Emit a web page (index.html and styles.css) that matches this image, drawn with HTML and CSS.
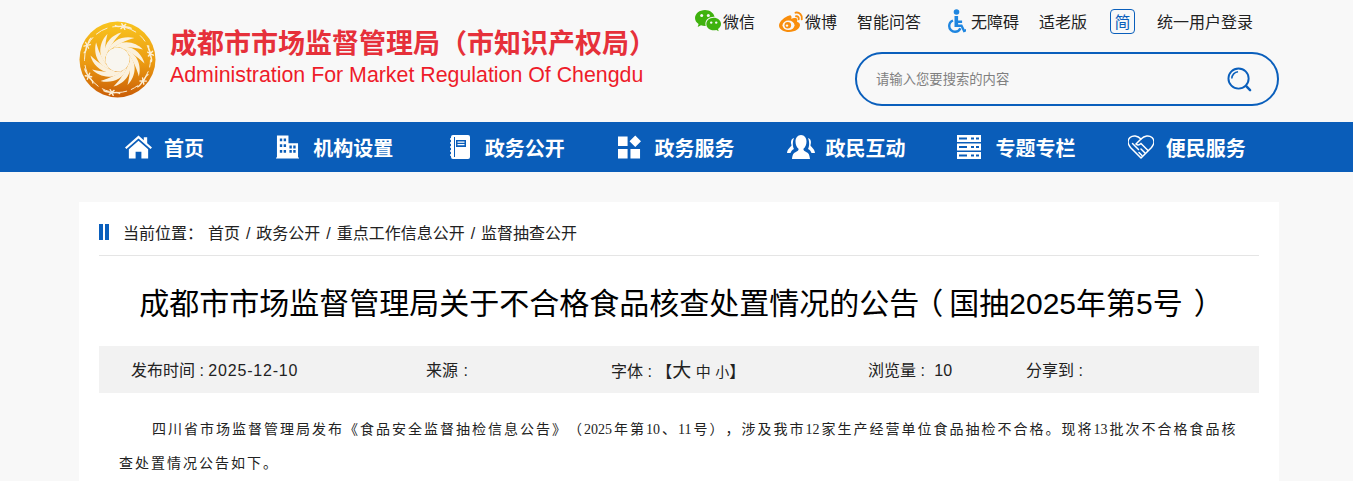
FILE: index.html
```html
<!DOCTYPE html>
<html lang="zh-CN">
<head>
<meta charset="utf-8">
<title>成都市市场监督管理局</title>
<link rel="stylesheet" href="styles.css">
</head>
<body>
<header class="site-header">
  <div class="wrap header-inner">
    <div class="brand">
      <svg class="logo" viewBox="-38.500 -38.500 77 77" aria-hidden="true">
        <defs>
          <linearGradient id="gold" x1="0" y1="0" x2="0" y2="1">
            <stop offset="0" stop-color="#f9c51f"/>
            <stop offset="0.55" stop-color="#eb9a12"/>
            <stop offset="1" stop-color="#c95c06"/>
          </linearGradient>
          <path id="blade" d="M4,-27 C-5,-25 -16,-15 -12,-2 C-9,-11 -3,-20 4,-27Z" fill="#fbf1dd"/>
          <g id="knot" fill="none" stroke="#fbeed6" stroke-width="1.400" stroke-linecap="round">
            <path d="M-8,-33 C-5,-31.500 -3,-34 0,-33.500 C3,-33 5,-34.500 8,-33"/>
            <path d="M-2,-36 L2,-31 M2,-36 L-2,-31"/>
          </g>
        </defs>
        <circle r="38" fill="url(#gold)"/>
        <circle r="12" fill="#f8f6f0"/>
        <use href="#blade"/>
        <use href="#blade" transform="rotate(30)"/>
        <use href="#blade" transform="rotate(60)"/>
        <use href="#blade" transform="rotate(90)"/>
        <use href="#blade" transform="rotate(120)"/>
        <use href="#blade" transform="rotate(150)"/>
        <use href="#blade" transform="rotate(180)"/>
        <use href="#blade" transform="rotate(210)"/>
        <use href="#blade" transform="rotate(240)"/>
        <use href="#blade" transform="rotate(270)"/>
        <use href="#blade" transform="rotate(300)"/>
        <use href="#blade" transform="rotate(330)"/>
        <circle r="33" fill="none" stroke="#fbeed6" stroke-width="1" stroke-dasharray="8 4 13 5"/>
        <use href="#knot" transform="rotate(10)"/>
        <use href="#knot" transform="rotate(80)"/>
        <use href="#knot" transform="rotate(130)"/>
        <use href="#knot" transform="rotate(190)"/>
        <use href="#knot" transform="rotate(240)"/>
        <use href="#knot" transform="rotate(295)"/>
      </svg>
      <div class="brand-text">
        <div class="brand-cn">成都市市场监督管理局（市知识产权局）</div>
        <div class="brand-en">Administration For Market Regulation Of Chengdu</div>
      </div>
    </div>
    <div class="tools">
      <nav class="toplinks">
        <a class="toplink link-wechat">
          <svg class="ico-wechat" viewBox="0 0 26 22" aria-hidden="true">
            <path fill="#3fb20e" d="M10 0C4.5 0 0 3.6 0 8c0 2.5 1.4 4.6 3.6 6.1L2.7 17l3.3-1.7c1.200.4 2.600.6 4 .6h.7a6.500 6.500 0 0 1-.3-1.900C10.400 9.900 14 6.800 18.800 6.800h.8C18.700 2.900 14.800 0 10 0z"/>
            <circle cx="6.700" cy="5.400" r="1.500" fill="#f8f8f8"/>
            <circle cx="13.300" cy="5.400" r="1.500" fill="#f8f8f8"/>
            <path fill="#3fb20e" d="M26 14c0-3.800-3.400-6.300-7.300-6.300-4.200 0-7.400 2.800-7.400 6.300s3.200 6.300 7.400 6.300c.9 0 1.800-.1 2.600-.4l2.400 1.400-.7-2.300c1.800-1.200 3-2.900 3-5z"/>
            <circle cx="16.200" cy="12.600" r="1.200" fill="#f8f8f8"/>
            <circle cx="21.200" cy="12.600" r="1.200" fill="#f8f8f8"/>
          </svg>
          <span>微信</span>
        </a>
        <a class="toplink link-weibo">
          <svg class="ico-weibo" viewBox="0 0 25 22" aria-hidden="true">
            <path fill="#f98e0c" d="M10.500 5.500C6 6.500 0 11.500 0 15.500 0 19.500 5 22 10 22c6.500 0 11-3.700 11-7 0-2-1.700-2.900-3-3.300.5-1.400.5-2.800-.6-3.400-1.300-.7-3.700-.1-5.100.6.500-1.800.2-3.100-.7-3.500-.3-.1-.7-.1-1.100.1z"/>
            <ellipse cx="9.500" cy="15.300" rx="6" ry="4.800" fill="#f8f8f8"/>
            <circle cx="8.800" cy="15.300" r="3.300" fill="#f98e0c"/>
            <circle cx="8" cy="15.600" r="1.200" fill="#f8f8f8"/>
            <path fill="none" stroke="#f98e0c" stroke-width="1.900" stroke-linecap="round" d="M16.500 2.700c3.800-.9 7.200 2.500 6.300 6.700M17 6.300c1.800-.4 3.100 1 2.700 2.900"/>
          </svg>
          <span>微博</span>
        </a>
        <a class="toplink link-qa">智能问答</a>
        <a class="toplink link-access">
          <svg class="ico-access" viewBox="0 0 18 24" aria-hidden="true">
            <circle cx="8.500" cy="3" r="2.800" fill="#1f86e0"/>
            <path fill="#1f86e0" d="M6.500 7h3.600v4.500h4v2.400h-4l.1 1.500h4l2.500 5.200 1.300-.5.700 2-3.200 1.300-2.600-5.500H6.500z"/>
            <path fill="none" stroke="#1f86e0" stroke-width="2.400" d="M5 11.500C2.500 12.500 1.200 14.500 1.200 17c0 3.400 2.700 5.800 5.800 5.800 2.500 0 4.500-1.300 5.500-3.500"/>
          </svg>
          <span>无障碍</span>
        </a>
        <a class="toplink link-old">适老版</a>
        <a class="toplink link-lang">简</a>
        <a class="toplink link-login">统一用户登录</a>
      </nav>
      <form class="search">
        <input class="search-input" type="text" placeholder="请输入您要搜索的内容">
        <svg class="ico-search" viewBox="0 0 26 26" aria-hidden="true">
          <circle cx="12" cy="12" r="10.500" fill="none" stroke="#0a5fbc" stroke-width="2"/>
          <path fill="none" stroke="#0a5fbc" stroke-width="1.600" d="M5 12c0-3.800 3-6.800 6.500-7"/>
          <path fill="none" stroke="#0a5fbc" stroke-width="2.600" stroke-linecap="round" d="M20 20l4 4"/>
        </svg>
      </form>
    </div>
  </div>
</header>

<nav class="mainnav">
  <div class="wrap nav-inner">
    <a class="nav-item">
      <svg class="nav-ico ico-home" viewBox="0 0 28 24" aria-hidden="true"><path fill="#fff" d="M14 0 0 12.500l1.500 1.700L14 3.200l12.500 11 1.500-1.700-5-4.500V2h-3.500v3zM14 5.500 4 14.300V24h7v-7h6v7h7v-9.700z"/></svg>
      <span>首页</span>
    </a>
    <a class="nav-item">
      <svg class="nav-ico ico-building" viewBox="0 0 24 24" aria-hidden="true"><path fill="#fff" fill-rule="evenodd" d="M1 0h12v8h10v15h1v1H0v-1h1zM4 3v3h2.500V3zm4 0v3h2.500V3zM4 9v3h2.500V9zm4 0v3h2.500V9zm6 1.500v3h2.500v-3zm4 0v3h2.500v-3zM4 15v3h2.500v-3zm4 0v3h2.500v-3zm6 0v3h2.500v-3zm4 0v3h2.500v-3z"/></svg>
      <span>机构设置</span>
    </a>
    <a class="nav-item nav-item-book">
      <svg class="nav-ico ico-book" viewBox="0 0 20 24" aria-hidden="true"><path fill="#fff" fill-rule="evenodd" d="M3 0h15a2 2 0 0 1 2 2v20a2 2 0 0 1-2 2H3a2 2 0 0 1-2-2V2a2 2 0 0 1 2-2zm3 5v7h10V5zm1.500 1.500h7v1.200h-7zm0 2.500h7v1.200h-7z"/><path fill="none" stroke="#fff" stroke-width="1.300" d="M0 4h3M0 8h3M0 12h3M0 16h3M0 20h3"/><path fill="#0a5db9" d="M4 2h1v20H4z"/></svg>
      <span>政务公开</span>
    </a>
    <a class="nav-item nav-item-grid">
      <svg class="nav-ico ico-grid" viewBox="0 0 24 24" aria-hidden="true"><path fill="#fff" d="M0 1h10v10H0zM18 0l6 6-6 6-6-6zM0 14h10v10H0zM13 14h10v10H13z"/></svg>
      <span>政务服务</span>
    </a>
    <a class="nav-item">
      <svg class="nav-ico ico-people" viewBox="0 0 28 24" aria-hidden="true"><path fill="#fff" d="M14 0c3.500 0 5.500 3 5.500 6.500 0 3-1.200 5.800-3 7.300-.5 1.500 1 2.500 3.500 3.700 1.500.8 2.500 2 3 6.500H5c.5-4.500 1.500-5.700 3-6.500 2.500-1.200 4-2.200 3.500-3.700-1.800-1.500-3-4.300-3-7.300C8.500 3 10.500 0 14 0z"/><path fill="#fff" d="M7 3C4 4 3.500 7 4.500 10c.5 1.500-4 3-4.500 8h3.500c.5-1.500 1.500-3 3.500-4-1-2-2-6 0-11zM21 3c3 1 3.500 4 2.500 7-.5 1.500 4 3 4.500 8h-3.500c-.5-1.500-1.500-3-3.500-4 1-2 2-6 0-11z"/></svg>
      <span>政民互动</span>
    </a>
    <a class="nav-item">
      <svg class="nav-ico ico-rows" viewBox="0 0 24 24" aria-hidden="true"><path fill="#fff" fill-rule="evenodd" d="M0 0h24v7H0zm2 2.500V4.500h8V2.500zm12 0V4.500h3V2.500zm5 0V4.500h3V2.500zM0 8.500h24v7H0zm2 2.500v2h8v-2zm12 0v2h3v-2zm5 0v2h3v-2zM0 17h24v7H0zm2 2.500v2h8v-2zm12 0v2h3v-2zm5 0v2h3v-2z"/></svg>
      <span>专题专栏</span>
    </a>
    <a class="nav-item">
      <svg class="nav-ico ico-heart" viewBox="0 0 26 24" aria-hidden="true"><path fill="none" stroke="#fff" stroke-width="1.500" stroke-linejoin="round" d="M13 23 2.500 12.500C-.5 9-.5 5 2 2.500 5 0 9.500.5 13 4c3.500-3.500 8-4 11-1.500 2.500 2.500 2.500 6.500-.5 10z"/><path fill="none" stroke="#fff" stroke-width="1.500" stroke-linecap="round" d="M13 4 8 9c1.500 1.500 3.500 1 5-.5l7 7M17 18l-4-4M14 20.500l-3-3M4.500 8.500l6 6"/></svg>
      <span>便民服务</span>
    </a>
  </div>
</nav>

<main class="wrap article">
  <div class="crumbs">
    <span class="crumb-mark"></span>
    <span class="crumb-label">当前位置<span class="punct">：</span></span>
    <span class="crumb-path">首页 / 政务公开 / 重点工作信息公开 / 监督抽查公开</span>
  </div>
  <h1 class="title">成都市市场监督管理局关于不合格食品核查处置情况的公告<span class="paren-open">（</span>国抽2025年第5号<span class="paren-close">）</span></h1>
  <div class="meta">
    <span class="meta-date">发布时间 : <span class="date-num">2025-12-10</span></span>
    <span class="meta-source">来源 :</span>
    <span class="meta-font">字体 : 【<b class="fs-l">大</b> <b class="fs-m">中</b> <b class="fs-s">小</b>】</span>
    <span class="meta-views">浏览量 : <span class="views-num">10</span></span>
    <span class="meta-share">分享到 :</span>
  </div>
  <p class="body-text">四川省市场监督管理局发布《食品安全监督抽检信息公告》（<span class="num">2025</span>年第<span class="num">10</span>、<span class="num">11</span>号），涉及我市<span class="num">12</span>家生产经营单位食品抽检不合格。现将<span class="num">13</span>批次不合格食品核<br>查处置情况公告如下。</p>
</main>
</body>
</html>
```

FILE: styles.css
```css
* { box-sizing: border-box; }
html, body { margin: 0; padding: 0; }
body {
  background: #f8f8f8;
  color: #222;
  font-family: "Liberation Sans", "Noto Sans CJK SC", sans-serif;
  overflow: hidden;
  height: 481px;
  text-spacing-trim: space-all;
}
a { color: inherit; text-decoration: none; }
.wrap { width: 1200px; margin: 0 0 0 79px; }
.punct { font-family: "Noto Sans CJK TC", sans-serif; }

.site-header { height: 122px; }
.header-inner { display: flex; justify-content: space-between; height: 122px; }

.brand { display: flex; align-items: flex-start; padding-top: 21px; }
.logo { width: 77px; height: 77px; display: block; }
.brand-text { margin-left: 14px; padding-top: 5px; }
.brand-cn {
  color: #e6303a;
  font-size: 27px;
  font-weight: 700;
  line-height: 36px;
  white-space: nowrap;
}
.brand-en {
  color: #ee1c2a;
  font-size: 21.35px;
  line-height: 26px;
  white-space: nowrap;
}

.tools { display: flex; flex-direction: column; align-items: flex-end; }
.toplinks {
  display: flex;
  align-items: center;
  height: 42px;
  padding: 0 26px 0 0;
  font-size: 16px;
  color: #222;
}
.toplink { display: flex; align-items: center; white-space: nowrap; }
.link-wechat { margin-right: 24px; }
.ico-wechat { width: 26px; height: 22px; margin-right: 2px; }
.link-weibo { margin-right: 20px; }
.ico-weibo { width: 25px; height: 22px; margin-right: 1px; }
.link-qa { margin-right: 27px; }
.link-access { margin-right: 20px; }
.ico-access { width: 18px; height: 24px; margin-right: 5px; }
.link-old { margin-right: 23px; }
.link-lang {
  width: 25px;
  height: 25px;
  justify-content: center;
  border: 1px solid #0a5fbc;
  border-radius: 4px;
  color: #0a5fbc;
  margin-right: 22px;
}

.search {
  display: flex;
  align-items: center;
  width: 424px;
  height: 54px;
  margin-top: 10px;
  padding: 0 25px 0 19px;
  border: 2px solid #0a5fbc;
  border-radius: 27px;
}
.search-input {
  flex: 1;
  min-width: 0;
  border: 0;
  outline: 0;
  background: transparent;
  font-family: inherit;
  font-size: 13.33px;
  color: #333;
  padding: 0;
}
.search-input::placeholder { color: #808080; opacity: 1; }
.ico-search { width: 25px; height: 25px; flex: none; }

.mainnav { height: 50px; background: #0a5db9; }
.nav-inner {
  display: grid;
  grid-template-columns: repeat(7, 170.4px);
  height: 50px;
  padding-left: 0.25px;
}
.nav-item {
  display: flex;
  align-items: center;
  justify-content: center;
  color: #fff;
  font-size: 20px;
  font-weight: 700;
  white-space: nowrap;
}
.nav-item-book { padding-left: 4px; }
.nav-item-grid { padding-left: 1px; }
.nav-ico { height: 24px; flex: none; }
.ico-home { width: 27px; margin-right: 12px; }
.ico-building { width: 23px; margin-right: 14px; }
.ico-book { width: 20px; margin-right: 15px; }
.ico-grid { width: 23px; margin-right: 14px; }
.ico-people { width: 28px; margin-right: 11px; }
.ico-rows { width: 24px; margin-right: 14px; }
.ico-heart { width: 26px; margin-right: 12px; }

.article {
  background: #fff;
  margin-top: 30px;
  padding: 0 20px;
  height: 279px;
  overflow: hidden;
}
.crumbs {
  display: flex;
  align-items: center;
  height: 54px;
  padding-top: 7px;
  border-bottom: 1px solid #e5e5e5;
  font-size: 16px;
  color: #222;
}
.crumb-mark {
  width: 10px;
  height: 16px;
  margin-right: 14px;
  border-left: 4px solid #0a5fbc;
  border-right: 4px solid #0a5fbc;
}
.crumb-label { margin-right: 5px; }
.crumb-path { word-spacing: 1.5px; }

.title {
  margin: 0;
  height: 90px;
  padding-right: 6px;
  font-size: 30px;
  font-weight: 400;
  line-height: 96px;
  text-align: center;
  color: #000;
  white-space: nowrap;
}
.paren-open { font-feature-settings: "halt"; padding: 0 6px 0 9px; }
.paren-close { font-feature-settings: "halt"; padding: 0 4px 0 11px; }

.meta {
  display: flex;
  align-items: center;
  height: 47px;
  padding: 0 0 2px 32px;
  background: #f2f2f2;
  font-size: 16px;
  color: #222;
  white-space: nowrap;
}
.meta-date { width: 295px; }
.date-num { letter-spacing: 0.8px; }
.meta-source { width: 185px; word-spacing: 1px; }
.meta-font { width: 257px; }
.meta-views { width: 158px; }
.views-num { margin-left: 5px; }
.fs-l { font-size: 19px; font-weight: 400; }
.fs-m { font-size: 15px; font-weight: 400; }
.fs-s { font-size: 14px; font-weight: 400; }

.body-text {
  margin: 20px 0 0;
  padding: 0 20px;
  font-family: "Liberation Serif", "Noto Sans CJK SC", serif;
  font-size: 14px;
  line-height: 34px;
  letter-spacing: 2px;
  text-indent: 33px;
  color: #222;
}
.num { letter-spacing: 0; margin-right: 2px; }
```
